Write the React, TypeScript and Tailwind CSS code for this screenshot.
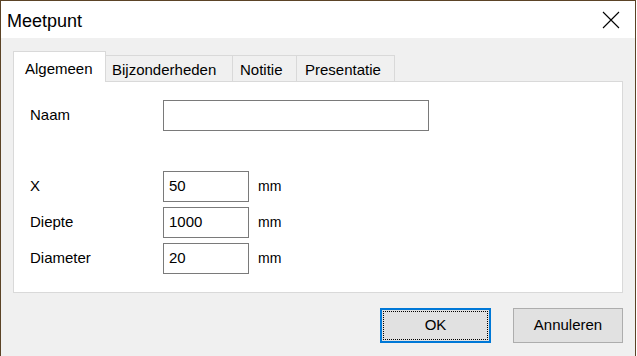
export default function App() {
  const rows = [
    { label: 'X', value: '50' },
    { label: 'Diepte', value: '1000' },
    { label: 'Diameter', value: '20' },
  ]

  return (
    <div className="w-[637px] h-[356px] bg-white overflow-hidden" style={{ fontFamily: '"Liberation Sans", Arial, sans-serif' }}>
      <div className="w-[636px] h-[356px] flex flex-col border-t border-l border-r border-[#5b4326]">
        {/* title bar */}
        <div className="h-[37px] bg-white flex items-center justify-between pl-[6px] pr-[15px]">
          <span className="text-[18px] text-black leading-none pt-[2px]">Meetpunt</span>
          <svg width="18" height="18" viewBox="0 0 18 18" className="text-black">
            <path d="M1 1L17 17M17 1L1 17" stroke="currentColor" strokeWidth="1.1" fill="none" />
          </svg>
        </div>

        {/* body */}
        <div className="flex-1 bg-[#f0f0f0] px-[12px] pt-[13px] text-[15px] text-black">
          <div className="flex items-end h-[30px]">
            <div className="relative z-10 h-[31px] -mb-px w-[93px] bg-white border border-b-0 border-[#d9d9d9] pl-[11px] pt-[6px]">
              Algemeen
            </div>
            <div className="h-[26px] w-[127px] border border-l-0 border-b-0 border-[#d9d9d9] bg-[#f0f0f0] pl-[6px] pt-[3px]">
              Bijzonderheden
            </div>
            <div className="h-[26px] w-[64px] border border-l-0 border-b-0 border-[#d9d9d9] bg-[#f0f0f0] pl-[7px] pt-[3px]">
              Notitie
            </div>
            <div className="h-[26px] w-[98px] border border-l-0 border-b-0 border-[#d9d9d9] bg-[#f0f0f0] pl-[8px] pt-[3px]">
              Presentatie
            </div>
          </div>

          <div className="h-[212px] w-[610px] bg-white border border-[#d9d9d9] pt-[18px] pl-[16px]">
            <div className="flex items-center h-[31px]">
              <span className="w-[133px]">Naam</span>
              <div className="w-[266px] h-[31px] border border-[#7a7a7a] bg-white" />
            </div>
            <div className="mt-[40px] flex flex-col gap-[5px]">
              {rows.map((r) => (
                <div key={r.label} className="flex items-center h-[31px]">
                  <span className="w-[133px]">{r.label}</span>
                  <div className="w-[86px] h-[31px] border border-[#7a7a7a] bg-white flex items-center pl-[5px]">
                    {r.value}
                  </div>
                  <span className="ml-[9px] text-[14px]">mm</span>
                </div>
              ))}
            </div>
          </div>

          <div className="flex justify-end gap-[22px] mt-[15px] pr-0">
            <button className="w-[111px] h-[35px] bg-[#e1e1e1] border-2 border-[#0078d7] p-[1px]">
              <div className="w-full h-full border border-dotted border-black flex items-center justify-center">
                OK
              </div>
            </button>
            <button className="w-[110px] h-[35px] bg-[#e1e1e1] border border-[#adadad] flex items-center justify-center">
              Annuleren
            </button>
          </div>
        </div>
      </div>
    </div>
  )
}
